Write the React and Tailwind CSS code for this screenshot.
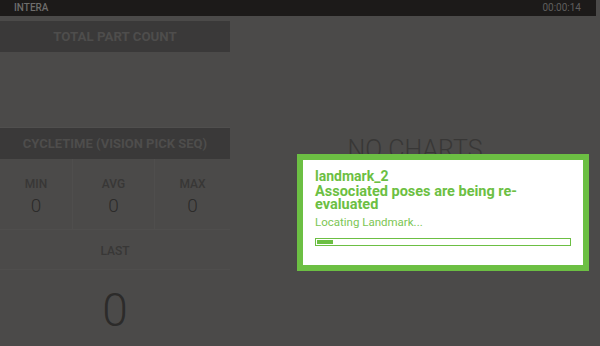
export default function App() {
  return (
    <div className="relative w-[600px] h-[346px] overflow-hidden bg-[#4b4a49] font-['Roboto','Liberation_Sans',sans-serif]">
      {/* Top bar */}
      <div className="w-[596px] h-[16px] bg-[#1c1a19] flex items-center justify-between px-[14px] text-[10px] leading-none">
        <span className="text-[#6e6d6c] font-medium">INTERA</span>
        <span className="text-[#5f5e5d] pr-[1px]">00:00:14</span>
      </div>

      <div className="flex pt-[5px]">
        {/* Left column */}
        <div className="w-[230px] flex flex-col">
          <div className="h-[31px] bg-[#3a3939] flex items-center justify-center text-[13.3px] font-bold text-[#4e4d4c]">
            TOTAL PART COUNT
          </div>
          <div className="h-[76px] border-b border-[#504f4e]"></div>
          <div className="h-[31px] bg-[#3a3939] flex items-center justify-center text-[13px] font-bold text-[#4e4d4c]">
            CYCLETIME (VISION PICK SEQ)
          </div>
          <div className="grid grid-cols-[73px_82px_75px] h-[71px] border-b border-[#4f4e4d]">
            {[
              ["MIN", "0"],
              ["AVG", "0"],
              ["MAX", "0"],
            ].map(([label, value], i) => (
              <div
                key={label}
                className={
                  "flex flex-col items-center pt-[18px] " +
                  (i < 2 ? "border-r border-[#4f4e4d]" : "")
                }
              >
                <span className="text-[12px] leading-[14px] font-medium text-[#383736]">{label}</span>
                <span className="text-[19px] leading-[22px] font-light text-[#2c2b2a] mt-[4px]">{value}</span>
              </div>
            ))}
          </div>
          <div className="h-[40px] border-b border-[#4f4e4d] flex items-center justify-center pt-[3px]">
            <span className="text-[12px] leading-[14px] font-medium text-[#383736]">LAST</span>
          </div>
          <div className="flex justify-center pt-[14px]">
            <span className="text-[46px] leading-[52px] font-light text-[#2c2b2a]">0</span>
          </div>
        </div>

        {/* Right area */}
        <div className="flex-1 flex justify-center pt-[115px]">
          <span className="text-[25px] leading-[28px] font-light text-[#383736]">NO CHARTS</span>
        </div>
      </div>

      {/* Progress modal */}
      <div className="absolute left-[297px] top-[154px] w-[292px] h-[117px] border-[6px] border-[#6cbf43] bg-white pl-[12px] pr-[12px] pt-[8px]">
        <div className="text-[#6cbf43] font-bold text-[14px] leading-[16px]">landmark_2</div>
        <div className="text-[#6cbf43] font-bold text-[14.5px] leading-[13px] mt-[1px]">
          Associated poses are being re-
          <br />
          evaluated
        </div>
        <div className="text-[#7cc654] text-[11.5px] leading-[14px] mt-[4px]">Locating Landmark...</div>
        <div className="mt-[9px] w-[256px] h-[8px] border border-[#6cbf43] bg-white p-[1px]">
          <div className="h-full w-[16px] bg-[#6cbf43]"></div>
        </div>
      </div>
    </div>
  );
}
